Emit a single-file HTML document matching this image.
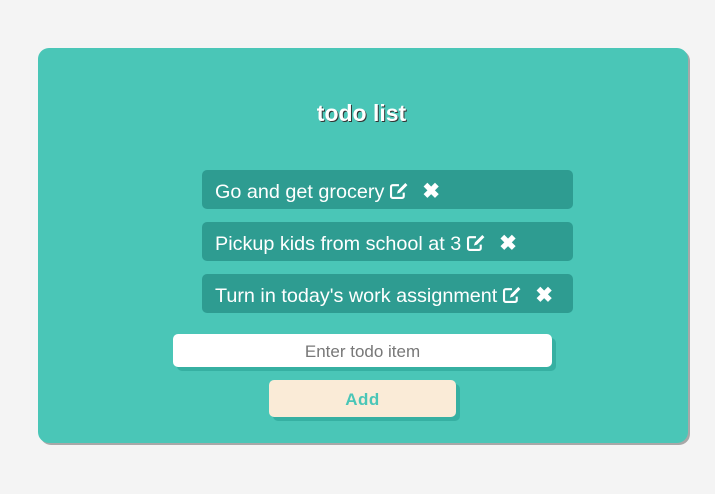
<!DOCTYPE html>
<html><head><style>
body{margin:0;width:715px;height:494px;background:#f4f4f4;font-family:"Liberation Sans",sans-serif;position:relative;overflow:hidden}
.card{position:absolute;left:38px;top:48px;width:650px;height:395px;background:#4ac6b7;border-radius:11px;box-shadow:2px 2px 0 #a8a8a8}
h1{position:absolute;left:0;width:100%;top:100px;margin:0;text-align:center;font-size:23px;font-weight:bold;color:#fff;text-shadow:1px 1px 0 #333;padding-left:8px;box-sizing:border-box}
.item{position:absolute;left:202px;width:371px;height:39px;background:#2e9c91;border-radius:5px;color:#fff;font-size:19.8px;line-height:44px;padding-left:13px;box-sizing:border-box;white-space:nowrap}
.item svg{vertical-align:-2px;margin-left:5px}
.x{display:inline-block;margin-left:12px;font-weight:bold;font-size:21px}
.inp{position:absolute;left:173px;top:334px;width:379px;height:33px;background:#fff;border-radius:5px;box-shadow:4px 4px 0 #36b0a2;text-align:center;line-height:36px;color:#777;font-size:17px}
.btn{position:absolute;left:269px;top:380px;width:187px;height:37px;background:#faebd7;border-radius:5px;box-shadow:4px 4px 0 #36b0a2;text-align:center;line-height:39px;color:#4ac6b7;font-weight:bold;font-size:17px;letter-spacing:0.5px}
</style></head><body>
<div class="card"></div>
<h1>todo list</h1>
<div class="item" style="top:170px">Go and get grocery<svg width="21" height="18" viewBox="0 0 19 17"><path d="M9 3H3a1.5 1.5 0 0 0-1.5 1.5v9A1.5 1.5 0 0 0 3 15h9a1.5 1.5 0 0 0 1.5-1.5V10" fill="none" stroke="#fff" stroke-width="2"/><path d="M7 11l1-3 7-7 2 2-7 7z" fill="#fff"/></svg><span class="x">✖</span></div>
<div class="item" style="top:222px">Pickup kids from school at 3<svg width="21" height="18" viewBox="0 0 19 17"><path d="M9 3H3a1.5 1.5 0 0 0-1.5 1.5v9A1.5 1.5 0 0 0 3 15h9a1.5 1.5 0 0 0 1.5-1.5V10" fill="none" stroke="#fff" stroke-width="2"/><path d="M7 11l1-3 7-7 2 2-7 7z" fill="#fff"/></svg><span class="x">✖</span></div>
<div class="item" style="top:274px">Turn in today's work assignment<svg width="21" height="18" viewBox="0 0 19 17"><path d="M9 3H3a1.5 1.5 0 0 0-1.5 1.5v9A1.5 1.5 0 0 0 3 15h9a1.5 1.5 0 0 0 1.5-1.5V10" fill="none" stroke="#fff" stroke-width="2"/><path d="M7 11l1-3 7-7 2 2-7 7z" fill="#fff"/></svg><span class="x">✖</span></div>
<div class="inp">Enter todo item</div>
<div class="btn">Add</div>
</body></html>
